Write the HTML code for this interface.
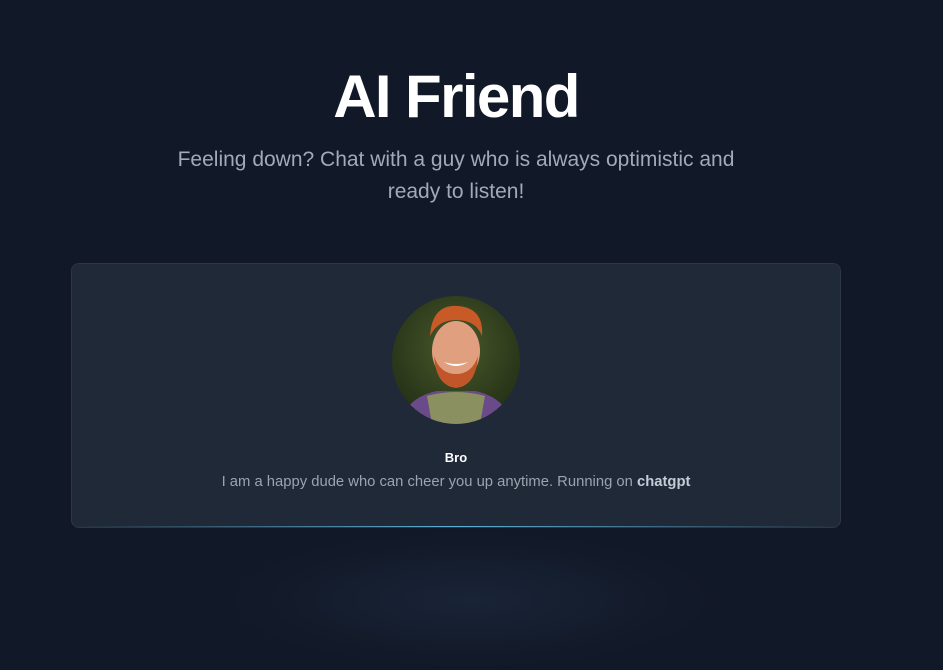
<!DOCTYPE html>
<html><head><style>
html,body{margin:0;padding:0;width:943px;height:593px;overflow:hidden;background:#111827;font-family:"Liberation Sans",sans-serif;}
.glow{position:absolute;left:220px;top:530px;width:500px;height:140px;border-radius:50%;background:radial-gradient(ellipse at center,rgba(35,50,72,.45),rgba(17,24,39,0) 70%);}
h1{position:absolute;top:62px;left:0;width:912px;text-align:center;margin:0;font-size:60px;font-weight:700;color:#fff;letter-spacing:-1.6px;}
.sub{position:absolute;top:144px;left:156px;width:600px;text-align:center;font-size:21px;line-height:32px;color:#a0aabb;}
.card{position:absolute;left:71px;top:263px;width:770px;height:265px;background:#1f2937;border:1px solid #2d3748;border-radius:8px;box-sizing:border-box;overflow:hidden;}
.line{position:absolute;left:0;bottom:0;width:100%;height:1px;background:linear-gradient(90deg,rgba(56,189,248,0),rgba(100,190,230,.9) 50%,rgba(56,189,248,0));}
.av{position:absolute;left:320px;top:32px;width:128px;height:128px;border-radius:50%;overflow:hidden;}
.name{position:absolute;top:186px;width:100%;text-align:center;color:#fff;font-weight:700;font-size:13px;}
.desc{position:absolute;top:210px;width:100%;text-align:center;color:#9ca3af;font-size:14.8px;}
.desc b{color:#c4ccd8;}
</style></head><body>
<div class="glow"></div>
<h1>AI Friend</h1>
<div class="sub">Feeling down? Chat with a guy who is always optimistic and ready to listen!</div>
<div class="card">
<div class="av"><svg width="128" height="128" viewBox="0 0 128 128">
<defs><radialGradient id="bg" cx="50%" cy="40%" r="70%"><stop offset="0" stop-color="#4a5a2a"/><stop offset="1" stop-color="#1d2a14"/></radialGradient></defs>
<rect width="128" height="128" fill="url(#bg)"/>
<path d="M10 120 Q20 100 45 95 L83 95 Q108 100 118 120 L118 128 L10 128Z" fill="#6b4a8a"/>
<path d="M35 100 Q64 92 93 100 L88 128 L40 128Z" fill="#8a9060"/>
<ellipse cx="64" cy="55" rx="24" ry="30" fill="#e0a080"/>
<path d="M42 60 Q44 90 64 92 Q84 90 86 60 Q80 78 64 78 Q48 78 42 60Z" fill="#c0562a"/>
<path d="M52 66 Q64 74 76 66 Q64 70 52 66Z" fill="#fff"/>
<path d="M38 40 Q40 8 66 10 Q92 12 90 40 Q84 24 64 24 Q46 24 38 40Z" fill="#c85a28"/>
</svg></div>
<div class="name">Bro</div>
<div class="desc">I am a happy dude who can cheer you up anytime. Running on <b>chatgpt</b></div>
<div class="line"></div>
</div>
</body></html>
